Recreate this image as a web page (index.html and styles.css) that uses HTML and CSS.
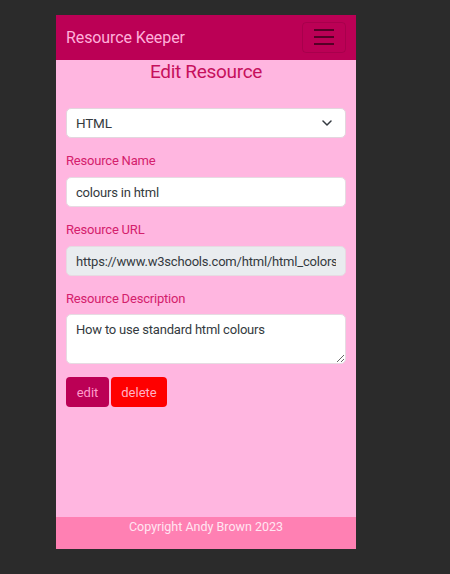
FILE: index.html
```html
<!DOCTYPE html>
<html lang="en">
<head>
<meta charset="utf-8">
<title>Resource Keeper</title>
<link rel="stylesheet" href="styles.css">
</head>
<body>
<div class="app">
  <header class="navbar">
    <span class="brand">Resource Keeper</span>
    <button class="toggler" aria-label="menu">
      <span class="bar"></span><span class="bar"></span><span class="bar"></span>
    </button>
  </header>
  <main class="main">
    <h2 class="title">Edit Resource</h2>
    <div class="select">
      <span>HTML</span>
      <svg class="chev" width="10" height="6" viewBox="0 0 10 6"><path d="M1 1 L5 5 L9 1" fill="none" stroke="#343a40" stroke-width="1.5" stroke-linecap="round" stroke-linejoin="round"/></svg>
    </div>
    <label class="label">Resource Name</label>
    <input class="field" type="text" value="colours in html">
    <label class="label">Resource URL</label>
    <input class="field disabled" type="text" value="https://www.w3schools.com/html/html_colors.asp" disabled>
    <label class="label">Resource Description</label>
    <textarea class="field area">How to use standard html colours</textarea>
    <div class="actions">
      <button class="btn edit">edit</button>
      <button class="btn delete">delete</button>
    </div>
  </main>
  <footer class="footer">Copyright Andy Brown 2023</footer>
</div>
</body>
</html>
```
FILE: styles.css
```css
html, body {
  margin: 0;
  padding: 0;
  background: #2b2b2b;
  font-family: Roboto, "Liberation Sans", sans-serif;
}
.app {
  width: 300px;
  height: 534px;
  margin: 15px 0 0 56px;
  background: #ffb6e0;
  display: flex;
  flex-direction: column;
}
.navbar {
  height: 45px;
  background: #bb0055;
  display: flex;
  align-items: center;
  justify-content: space-between;
  padding: 0 10px;
  box-sizing: border-box;
}
.brand {
  color: #ffb0da;
  font-size: 16px;
  letter-spacing: -0.1px;
}
.toggler {
  width: 44px;
  height: 31px;
  margin-top: -1px;
  background: transparent;
  border: 1px solid rgba(0,0,0,0.1);
  border-radius: 4px;
  display: flex;
  flex-direction: column;
  align-items: center;
  justify-content: center;
  gap: 5px;
  padding: 0;
}
.bar {
  display: block;
  width: 20px;
  height: 2px;
  background: rgba(0,0,0,0.55);
}
.main {
  flex: 1;
  padding: 0 10px;
  display: flex;
  flex-direction: column;
}
.title {
  margin: 0 0 24px;
  text-align: center;
  font-weight: 400;
  font-size: 19px;
  letter-spacing: -0.3px;
  line-height: 24px;
  color: #c6105c;
}
.select {
  height: 30px;
  box-sizing: border-box;
  background: #fff;
  border: 1px solid #e3d6de;
  border-radius: 5px;
  display: flex;
  align-items: center;
  justify-content: space-between;
  padding: 0 13px 0 9px;
  font-size: 13.5px;
  letter-spacing: -0.2px;
  color: #343a40;
}
.chev { display: block; }
.label {
  margin: 13px 0 7px;
  font-size: 13px;
  letter-spacing: -0.2px;
  line-height: 19px;
  color: #d4206c;
}
.field {
  height: 30px;
  box-sizing: border-box;
  width: 100%;
  border: 1px solid #e6dbe2;
  border-radius: 5px;
  background: #fff;
  padding: 0 9px;
  font-family: inherit;
  font-size: 13px;
  letter-spacing: -0.2px;
  color: #343a40;
  outline: none;
}
.disabled {
  background: #e9ecef;
  color: #343a40;
  -webkit-text-fill-color: #343a40;
  opacity: 1;
}
.area {
  height: 50px;
  margin-top: -1px;
  padding: 5px 9px;
  resize: vertical;
  line-height: 20px;
}
.actions {
  margin-top: 13px;
  display: flex;
  gap: 2px;
}
.btn {
  height: 30px;
  border: none;
  border-radius: 4px;
  font-family: inherit;
  font-size: 13px;
  padding: 0 10px;
}
.edit {
  background: #bb0055;
  color: #ff9ccb;
  width: 43px;
}
.delete {
  background: #ff0000;
  color: #ffb2c6;
  width: 56px;
}
.footer {
  height: 32px;
  background: #ff80b3;
  color: #ffe6f2;
  font-size: 12.5px;
  text-align: center;
  line-height: 20px;
}
```
